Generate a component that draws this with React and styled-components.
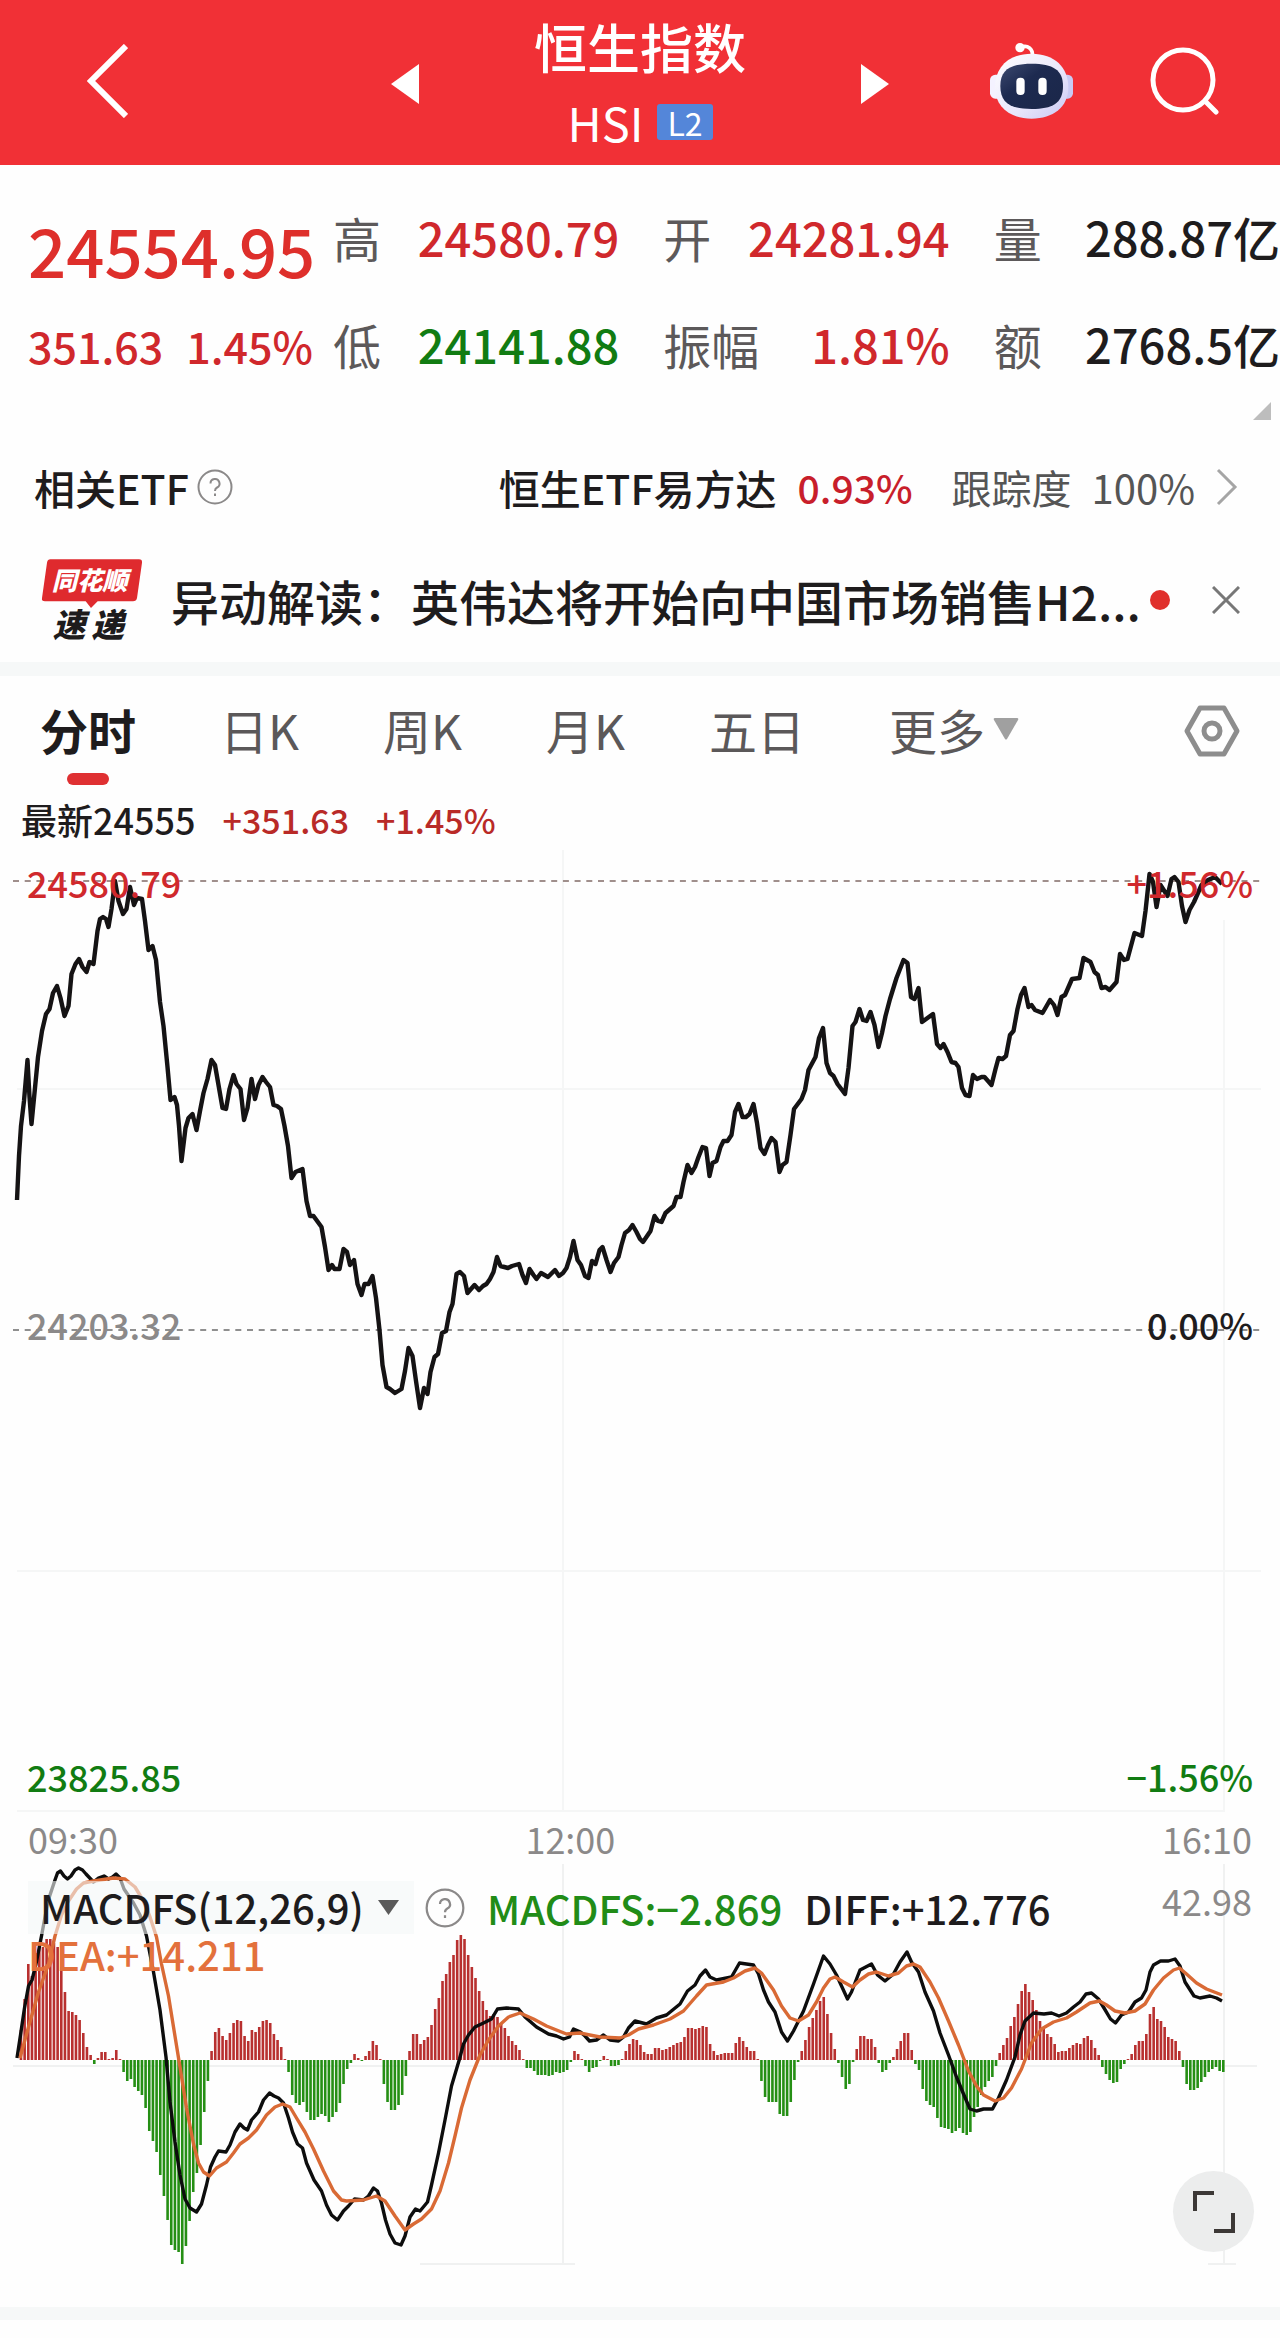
import React, { useState } from 'react';
import styled, { createGlobalStyle } from 'styled-components';

const RED = '#d0282c';
const GREEN = '#117c12';
const INK = '#1e1c1d';
const GREY = '#8b8989';

// minute prices, "x,y" in plot units
const PRICE_LINE = `
17,1200 19,1156 21,1126 24,1101 27.5,1060 29.5,1097 31.5,1124 34.5,1093 38,1057 42,1031 46,1014 49.5,1009 53,993 57,986
60.5,998 64.5,1016 68.5,1006 71.5,974 75.5,964 79,959 82.5,967 86.5,972 89.5,962 93.5,964 97.5,931 100,919 103,917 106,919
108.5,927 111.5,909 115,881 118.5,901 123,914 126.5,909 130,887 134,905 137,898 142,899 145,921 148.5,950 152.5,946 156,960
160,1002 163.5,1026 167.5,1067 170.5,1100 174.5,1097 177,1105 179,1126 181.5,1161 185.5,1128 188.5,1118 192.5,1114 196.5,1130
200,1111 203.5,1093 207.5,1079 211.5,1060 215,1065 218.5,1085 222.5,1108 226,1109 229.5,1089 233.5,1075 236.5,1084 240.5,1089
244,1120 247.5,1108 251.5,1079 255,1099 258.5,1085 262.5,1077 266,1082 270,1087 273.5,1105 277,1106 281,1109 284.5,1126
288,1146 291.5,1178 295.5,1172 302.5,1169 306.5,1201 310,1216 313.5,1216 321.5,1227 325,1247 328.5,1270 332,1265 334.5,1269
339.5,1269 343.5,1249 347,1252 350,1265 354,1260 357.5,1284 361.5,1295 364.5,1284 368.5,1284 372.5,1276 376,1298 379.5,1330
382.5,1365 386.5,1387 390,1389 395,1393 401.5,1389 405,1371 408.5,1348 412.5,1356 416,1381 420,1408 424,1388 427.5,1394
430.5,1372 434.5,1357 438,1354 442,1333 446,1331 449.5,1312 452.5,1304 456.5,1274 460,1272 464,1276 467.5,1293 474.5,1285
479,1290 483,1286 486.5,1284 490,1279 493.5,1272 497,1257 500.5,1266 508,1268 512,1266 519,1264 522.5,1275 526,1283
529.5,1269 533.5,1275 536.5,1279 541,1273 548,1277 555,1270 559,1276 563,1273 566.5,1268 570,1257 573.5,1241 577.5,1260
581,1265 585,1276 588.5,1278 592,1261 595.5,1264 599.5,1250 602.5,1247 606.5,1260 610.5,1272 614,1263 618.5,1257 621.5,1245
625,1233 629,1230 632.5,1225 636.5,1232 640,1239 643,1242 650.5,1231 654.5,1216 658,1221 661.5,1222 665.5,1213 673.5,1206
676.5,1197 680.5,1197 683.5,1182 687.5,1165 691.5,1173 695,1167 698.5,1157 702.5,1147 706,1148 709.5,1176 712.5,1163
716.5,1161 720.5,1147 723.5,1141 727.5,1141 731.5,1135 735,1112 738.5,1104 742.5,1117 746,1117 749.5,1114 753.5,1104
757,1123 760.5,1148 764.5,1154 768,1145 771.5,1138 775.5,1142 779.5,1172 782.5,1165 786.5,1162 790.5,1135 794,1109
801.5,1099 805,1090 808.5,1070 815.5,1057 819,1038 823,1028 826.5,1063 830,1073 833.5,1076 837.5,1084 845,1094 848.5,1068
852.5,1026 855.5,1022 859.5,1009 863,1020 866.5,1021 870.5,1012 874.5,1025 878.5,1047 882,1033 885.5,1016 890,999 896.5,978
903.5,960 907.5,963 911,997 914.5,999 918.5,988 922,1022 933,1014 937,1044 940.5,1048 943.5,1044 947.5,1052 951.5,1062
955.5,1063 958.5,1067 962,1088 965.5,1095 969.5,1096 973,1075 977,1079 981.5,1077 984.5,1077 991.5,1085 995.5,1069
998.5,1058 1002.5,1059 1006,1056 1010,1035 1013.5,1031 1017.5,1009 1021,995 1024.5,988 1028.5,1007 1031.5,1005 1035,1010
1042.5,1013 1046,1007 1050,1000 1054,1005 1057.5,1015 1061.5,997 1065,995 1072,979 1079.5,978 1083.5,958 1090.5,962
1094.5,972 1098,975 1101.5,988 1105.5,987 1109.5,990 1116.5,982 1120,954 1124,960 1127.5,959 1134.5,933 1142,936 1145.5,911
1149.5,874 1153,882 1156.5,907 1160.5,885 1167.5,896 1171.5,879 1174.5,877 1178.5,882 1182,906 1185.5,922 1189.5,910
1194,902 1201.5,885 1208,880 1215,877 1222,884`;

const DIFF_LINE = `
17,2058 20.5,2035 24.5,2008 28.5,1986 32,1980 36,1964 41.5,1936 48,1901 55,1880 57.5,1873 60.5,1871 64,1876 67.5,1879
71,1876 75,1870 78.5,1868 82.5,1870 86,1874 93.5,1882 98.5,1878 104,1876 108.5,1879 112.5,1877 116,1874 120,1878 124,1889
133.5,1903 140,1915 146.5,1936 153.5,1972 160,2010 166,2057 170,2102 175,2142 180,2175 185,2199 190,2208 196.5,2212
201.5,2204 206.5,2185 210.5,2167 215,2157 218.5,2151 226,2152 230,2145 235,2132 240,2124 244,2128 247.5,2130 251.5,2120
258.5,2112 263.5,2100 269.5,2093 274,2096 278.5,2098 283.5,2103 288.5,2118 292.5,2132 297.5,2144 302.5,2148 306.5,2163
314,2180 321.5,2191 326.5,2205 331.5,2215 337.5,2220 343.5,2211 348.5,2206 354.5,2199 363.5,2200 368.5,2196 373.5,2188
377.5,2191 381.5,2203 385.5,2220 390,2234 395,2243 401,2245 405,2236 410,2217 415.5,2209 420,2211 427.5,2202 431.5,2185
438.5,2153 445,2120 451.5,2086 459.5,2059 463.5,2044 468.5,2035 475,2027 483.5,2023 491.5,2019 497.5,2009 506.5,2008
518.5,2009 525,2017 536.5,2027 548.5,2034 556.5,2036 563.5,2039 569.5,2037 573.5,2029 580.5,2032 585,2036 589.5,2041
596.5,2040 603.5,2035 610,2040 618.5,2041 623.5,2037 628.5,2028 635,2021 646.5,2024 656.5,2018 666.5,2015 680,2004
687.5,1991 695,1985 700,1976 705.5,1970 710,1977 716.5,1980 731.5,1977 739.5,1963 753.5,1965 758.5,1974 763.5,1990
768.5,2002 775,2012 781.5,2032 787.5,2041 793.5,2031 803.5,2011 813.5,1984 818.5,1970 823.5,1956 830,1964 836.5,1975
847.5,1999 851.5,1992 860,1970 871.5,1964 877.5,1975 885,1981 893.5,1974 900,1962 907,1952 911.5,1962 918.5,1972 925,1992
933.5,2011 940,2033 948.5,2055 956.5,2077 963.5,2094 970,2109 976.5,2111 983.5,2109 992.5,2109 998.5,2098 1006.5,2080
1015,2057 1020,2035 1025,2021 1033.5,2013 1044,2014 1051.5,2013 1059,2016 1066.5,2013 1073.5,2007 1080,2002 1086,1994
1091.5,1993 1098.5,1999 1104,2008 1110.5,2019 1115.5,2023 1121.5,2015 1128.5,2012 1135,2002 1141.5,1998 1146,1990
1150,1972 1153.5,1965 1160.5,1961 1168.5,1961 1175,1959 1180,1966 1185,1982 1194,1996 1200,1998 1210,1996 1216.5,1998
1222,2001`;

const DEA_LINE = `
20,2058 28.5,2027 38.5,1992 48.5,1964 55,1936 61.5,1915 68.5,1901 76.5,1889 83.5,1883 93.5,1881 113.5,1878 125,1879
135,1887 143.5,1901 150,1917 156.5,1937 161.5,1964 168.5,1996 173.5,2027 180,2067 186.5,2108 193.5,2144 198.5,2163
203.5,2172 209.5,2176 216.5,2168 226.5,2162 233.5,2153 240,2144 248.5,2138 256.5,2130 266.5,2115 275,2107 282.5,2104
290,2107 296.5,2118 305,2132 313.5,2149 323.5,2171 333.5,2191 341.5,2200 346.5,2201 363.5,2200 376.5,2196 385,2201
395,2216 405,2230 413.5,2224 421.5,2219 431.5,2209 440,2191 448.5,2163 455,2136 461.5,2108 470,2080 480,2055 488.5,2040
498.5,2026 508.5,2017 520,2013 533.5,2019 546.5,2026 566.5,2034 580,2033 600,2037 620,2038 628.5,2035 638.5,2029
653.5,2025 670,2019 683.5,2011 696.5,1996 706.5,1985 723.5,1982 733.5,1978 745,1971 755,1968 761.5,1973 773.5,1990
781.5,2006 790,2018 798.5,2021 808.5,2015 816.5,2002 823.5,1988 830,1979 835,1977 843.5,1982 852.5,1987 860,1980
868.5,1974 876.5,1972 888.5,1976 898.5,1973 906.5,1966 913.5,1964 920,1967 930,1982 938.5,1998 948.5,2021 958.5,2045
968.5,2071 976.5,2086 983.5,2095 995,2101 1003.5,2098 1011.5,2088 1021.5,2069 1031.5,2043 1041.5,2029 1053.5,2022
1066.5,2018 1076.5,2012 1090,2003 1099.5,2001 1106.5,2005 1115,2011 1125,2013 1135,2011 1145,2004 1153.5,1990 1163.5,1978
1173.5,1970 1179.5,1968 1186.5,1974 1196.5,1983 1206.5,1989 1222,1995`;

const MACD_BARS = [
    0, 30, 61, 96, 84, 107, 113, 113, 121, 121, 117, 113, 93, 68, 49, 48, 45, 40, 27, 13, 5, -4, 2, 8, 8, 1, 2, 10, 1,
    -12, -21, -19, -27, -31, -35, -48, -71, -81, -92, -115, -136, -160, -185, -190, -192, -204, -186, -161, -132, -113, -85, -52, -21,
    9, 28, 32, 24, 20, 27, 37, 40, 39, 24, 19, 30, 28, 33, 39, 40, 37, 26, 20, 13, 1,
    -12, -35, -43, -45, -42, -52, -60, -60, -57, -54, -56, -62, -57, -52, -43, -24, -9, -3,
    6, 2, -1, 4, 9, 19, 15, 1, -24, -42, -50, -50, -45, -35, -16,
    9, 26, 26, 16, 20, 23, 35, 51, 62, 79, 86, 98, 105, 120, 125, 121, 105, 93, 82, 69, 59, 50, 44, 46, 43, 37, 32, 24, 19, 15, 10, 1,
    -8, -8, -11, -15, -15, -15, -16, -15, -12, -13, -12, -10, -2, 9, 6, 1, -6, -12, -8, -7, -1, 4, 1, -6, -6, -5, 1,
    9, 16, 21, 20, 15, 8, 6, 6, 12, 12, 10, 11, 13, 15, 17, 18, 23, 32, 32, 31, 32, 34, 33, 16, 9, 5, 6, 7, 7, 7, 17, 23, 19, 13, 9, 9, 1,
    -21, -37, -42, -42, -42, -54, -56, -56, -42, -20, -2, 9, 20, 33, 42, 50, 59, 63, 46, 27, 11, -3, -17, -29, -24, -2,
    11, 24, 24, 21, 21, 13, -3, -12, -10, -3, 3, 11, 19, 27, 27, 10, -4, -10, -29, -41, -45, -47, -58, -67, -68, -69, -73, -71, -68, -73, -75, -72, -57, -47, -35, -27, -21, -17, -6,
    7, 15, 22, 34, 43, 56, 69, 76, 68, 60, 50, 39, 31, 26, 23, 16, 8, 9, 9, 12, 15, 17, 16, 22, 24, 20, 12, 5,
    -7, -14, -20, -23, -22, -9, -4, 1, 6, 15, 19, 19, 26, 46, 53, 41, 39, 33, 23, 21, 19, 9,
    -7, -24, -30, -30, -28, -22, -17, -12, -9, -7, -11, -12,
];
const ZERO = 2060;
const barX = (i) => 17 + (i * 1206) / (MACD_BARS.length - 1);

const STATS = [
    { label: '高', value: '24580.79', color: RED },
    { label: '开', value: '24281.94', color: RED },
    { label: '量', value: '288.87亿', color: INK },
    { label: '低', value: '24141.88', color: GREEN },
    { label: '振幅', value: '1.81%', color: RED },
    { label: '额', value: '2768.5亿', color: INK },
];

const TABS = ['分时', '日K', '周K', '月K', '五日'];

function Robot() {
    return (
        <svg width="84" height="78" viewBox="88 66 252 234" fill="none">
            <defs>
                <linearGradient id="shell" x1="0" y1="0" x2="1" y2="1">
                    <stop offset="0" stopColor="#fff" />
                    <stop offset="0.6" stopColor="#e8e6fb" />
                    <stop offset="1" stopColor="#c9c8f4" />
                </linearGradient>
                <linearGradient id="visor" x1="0" y1="0" x2="1" y2="1">
                    <stop offset="0" stopColor="#3d4a70" />
                    <stop offset="0.4" stopColor="#1d2a50" />
                    <stop offset="1" stopColor="#1b2749" />
                </linearGradient>
            </defs>
            <path d="M183 82C204 74 221 86 218 110" stroke="#fff" strokeWidth="11" />
            <circle cx="181" cy="83" r="14" fill="#fff" />
            <rect x="91" y="164" width="46" height="72" rx="16" fill="#f4f2ff" />
            <rect x="294" y="164" width="46" height="72" rx="16" fill="#c9caf3" />
            <path d="M216 101C285 101 326 142 326 202C326 262 280 296 216 296C152 296 106 262 106 202C106 142 147 101 216 101Z" fill="url(#shell)" />
            <path d="M216 131C280 131 310 150 310 198C310 250 278 267 216 267C154 267 122 250 122 198C122 150 152 131 216 131Z" fill="url(#visor)" />
            <rect x="170" y="173" width="25" height="52" rx="12" fill="#fff" />
            <rect x="236" y="173" width="25" height="52" rx="12" fill="#fff" />
        </svg>
    );
}

function NewsLogo() {
    return (
        <LogoSvg width="102" height="96" viewBox="62 56 306 288">
            <path d="M90 60H356Q366 60 365 70L350 176Q348 186 338 186H232L212 206L196 186H74Q63 186 65 176L80 70Q82 60 90 60Z" fill="#df2a2e" />
            <text x="94" y="153" fontSize="76" fill="#fff">同花顺</text>
            <text x="97" y="294" fontSize="98" fill={INK}>速</text>
            <text x="213" y="294" fontSize="98" fill={INK}>递</text>
        </LogoSvg>
    );
}

function Question({ size }) {
    return (
        <svg width={size} height={size} viewBox="0 0 36 36" fill="none" stroke={GREY} strokeWidth="2">
            <circle cx="18" cy="18" r="16.5" />
            <path d="M13.5 14.5a4.5 4.5 0 1 1 6.6 4c-1.5.8-2.1 1.6-2.1 3.4" />
            <path d="M18 24.5v2.5" />
        </svg>
    );
}

function App() {
    const [tab, setTab] = useState('分时');
    return (
        <Page>
            <GlobalStyle />
            <Header>
                <HeaderLeft>
                    <IconButton aria-label="返回">
                        <svg width="41" height="74" viewBox="0 0 41 74" fill="none" stroke="#fff" strokeWidth="6">
                            <path d="M39 2L4 37L39 72" />
                        </svg>
                    </IconButton>
                </HeaderLeft>
                <Switcher>
                    <IconButton aria-label="上一个">
                        <svg width="28" height="40" viewBox="0 0 28 40"><path d="M28 0V40L0 20Z" fill="#fff" /></svg>
                    </IconButton>
                    <TitleBlock>
                        <Title>恒生指数</Title>
                        <Code>HSI<Level>L2</Level></Code>
                    </TitleBlock>
                    <IconButton aria-label="下一个">
                        <svg width="28" height="40" viewBox="0 0 28 40"><path d="M0 0V40L28 20Z" fill="#fff" /></svg>
                    </IconButton>
                </Switcher>
                <HeaderRight>
                    <IconButton aria-label="智能助手"><Robot /></IconButton>
                    <IconButton aria-label="搜索">
                        <svg width="69" height="69" viewBox="0 0 69 69" fill="none" stroke="#fff" strokeWidth="5" strokeLinecap="round">
                            <circle cx="33" cy="33" r="30" />
                            <path d="M55 54L66 65" />
                        </svg>
                    </IconButton>
                </HeaderRight>
            </Header>

            <Summary>
                <Quote>
                    <Price>24554.95</Price>
                    <Change><span>351.63</span><span>1.45%</span></Change>
                </Quote>
                <Stats>
                    {STATS.map((s) => (
                        <Stat key={s.label}>
                            <dt>{s.label}</dt>
                            <StatValue $color={s.color}>{s.value}</StatValue>
                        </Stat>
                    ))}
                </Stats>
            </Summary>
            <Corner>
                <svg width="18" height="18" viewBox="0 0 18 18"><path d="M18 0V18H0Z" fill="#bdbdbd" /></svg>
            </Corner>

            <EtfRow>
                <EtfLabel>
                    相关ETF
                    <IconButton aria-label="说明"><Question size={36} /></IconButton>
                </EtfLabel>
                <EtfLink href="#etf">
                    <span>恒生ETF易方达</span>
                    <EtfRate>0.93%</EtfRate>
                    <EtfTrack><span>跟踪度</span><span>100%</span></EtfTrack>
                    <svg width="22" height="38" viewBox="0 0 22 38" fill="none" stroke="#a5a5a5" strokeWidth="3"><path d="M2 2L19 19L2 36" /></svg>
                </EtfLink>
            </EtfRow>

            <NewsRow>
                <NewsLogo />
                <NewsLink href="#news">异动解读：英伟达将开始向中国市场销售H2...</NewsLink>
                <Dot />
                <IconButton aria-label="关闭">
                    <svg width="28" height="28" viewBox="0 0 28 28" stroke="#777" strokeWidth="3"><path d="M1 1L27 27M27 1L1 27" /></svg>
                </IconButton>
            </NewsRow>
            <Band />

            <Tabs>
                {TABS.map((t) => (
                    <Tab key={t} $active={t === tab} onClick={() => setTab(t)}>{t}</Tab>
                ))}
                <Tab aria-haspopup="menu">
                    更多
                    <svg width="26" height="22" viewBox="0 0 26 22"><path d="M2 0H24Q26 0 25 2L14 21Q13 22 12 21L1 2Q0 0 2 0Z" fill="#a0a0a0" /></svg>
                </Tab>
                <Settings aria-label="设置">
                    <svg width="56" height="52" viewBox="0 0 56 52" fill="none" stroke="#8d8d8d" strokeWidth="5" strokeLinejoin="round">
                        <path d="M16 3H40L53 26L40 49H16L3 26Z" />
                        <circle cx="28" cy="26" r="8" />
                    </svg>
                </Settings>
            </Tabs>

            <Latest>
                <span>最新24555</span>
                <Up>+351.63</Up>
                <Up>+1.45%</Up>
            </Latest>

            <Plot>
                <PlotSvg $height={972} viewBox="0 844 1280 972" preserveAspectRatio="none">
                    <g stroke="#f5f6f6" strokeWidth="2">
                        <path d="M563 850V1812M1224 920V1812M17 1089H1261M17 1571H1261M17 1811H1224" />
                    </g>
                    <g strokeWidth="2" strokeDasharray="6 5.7">
                        <path d="M13 881H1261" stroke="#a08f8c" />
                        <path d="M13 1330H1261" stroke="#8f8f8f" />
                    </g>
                    <polyline points={PRICE_LINE} fill="none" stroke="#151314" strokeWidth="4.4" strokeLinejoin="round" />
                </PlotSvg>
                <Scale>
                    <ScaleRow $color={RED}><span>24580.79</span><span>+1.56%</span></ScaleRow>
                    <ScaleRow $color={GREY}><span>24203.32</span><Flat>0.00%</Flat></ScaleRow>
                    <ScaleRow $color={GREEN}><span>23825.85</span><span>−1.56%</span></ScaleRow>
                </Scale>
            </Plot>
            <Times>
                <span>09:30</span>
                <span>12:00</span>
                <span>16:10</span>
            </Times>

            <Plot>
                <PlotSvg $height={432} viewBox="0 1864 1280 432" preserveAspectRatio="none">
                    <path d="M563 1864V2264M1224 1864V2264M13 2066H1257M420 2264H575M1208 2264H1236" stroke="#f0f1f1" strokeWidth="2" />
                    {MACD_BARS.map((v, i) => (
                        <rect
                            key={i}
                            x={barX(i) - 1}
                            y={v > 0 ? ZERO - v : ZERO}
                            width="2.6"
                            height={Math.abs(v)}
                            fill={v > 0 ? '#b8302f' : '#258f14'}
                        />
                    ))}
                    <polyline points={DIFF_LINE} fill="none" stroke="#0d0d0d" strokeWidth="3.4" strokeLinejoin="round" />
                    <polyline points={DEA_LINE} fill="none" stroke="#d96a35" strokeWidth="3.4" strokeLinejoin="round" />
                </PlotSvg>
                <Legend>
                    <LegendRow>
                        <Picker>
                            <select aria-label="指标" defaultValue="macdfs">
                                <option value="macdfs">MACDFS(12,26,9)</option>
                            </select>
                            <svg width="21" height="15" viewBox="0 0 21 15"><path d="M0 0H21L10.5 15Z" fill="#5a5a5a" /></svg>
                        </Picker>
                        <IconButton aria-label="指标说明"><Question size={40} /></IconButton>
                        <Figure $color="#218c17">MACDFS:−2.869</Figure>
                        <Figure $color={INK}>DIFF:+12.776</Figure>
                        <MaxValue>42.98</MaxValue>
                    </LegendRow>
                    <Figure $color="#e3713c">DEA:+14.211</Figure>
                </Legend>
                <Expand aria-label="全屏">
                    <svg width="42" height="42" viewBox="0 0 42 42" fill="none" stroke="#3c3836" strokeWidth="4">
                        <path d="M2 20V2H21M40 22V40H21" />
                    </svg>
                </Expand>
            </Plot>
            <BottomBand />
        </Page>
    );
}

export default App;

const GlobalStyle = createGlobalStyle`
body {
    margin: 0;
    background: #fefefe;
    color: ${INK};
    font-family: "Noto Sans CJK SC", sans-serif;
    font-weight: 500;
}
button, select {
    font: inherit;
    color: inherit;
    border: 0;
    padding: 0;
    background: none;
    cursor: pointer;
}
a {
    color: inherit;
    text-decoration: none;
}
svg {
    display: block;
    flex: none;
}
`;

const Page = styled.div`
overflow: hidden;
padding-bottom: 18px;
`;

const IconButton = styled.button`
display: flex;
flex: none;
`;

const Header = styled.header`
display: grid;
grid-template-columns: 1fr 498px 1fr;
padding: 16px 0 13px;
background: #f13036;
color: #fff;
`;

const HeaderLeft = styled.div`
display: flex;
align-items: center;
padding: 0 0 6px 87px;
`;

const Switcher = styled.div`
display: flex;
align-items: center;
justify-content: space-between;
`;

const TitleBlock = styled.div`
display: flex;
flex-direction: column;
align-items: center;
gap: 16px;
`;

const Title = styled.h1`
margin: 0;
font-size: 53px;
font-weight: 500;
line-height: 60px;
`;

const Code = styled.div`
display: flex;
align-items: center;
gap: 14px;
font-size: 47px;
font-weight: 400;
line-height: 60px;
`;

const Level = styled.span`
padding: 0 10px;
border-radius: 3px;
background: #5486d9;
font-size: 32px;
line-height: 36px;
`;

const HeaderRight = styled.div`
display: flex;
align-items: center;
justify-content: flex-end;
gap: 77px;
padding: 0 61px 6px 0;
`;

const Summary = styled.section`
display: flex;
gap: 20px;
padding: 42px 0 0 28px;
`;

const Quote = styled.div`
flex: 285;
min-width: 0;
padding-top: 6px;
color: ${RED};
`;

const Price = styled.div`
margin-bottom: 30px;
color: #de2f2b;
font-size: 67px;
line-height: 72px;
`;

const Change = styled.div`
display: flex;
justify-content: space-between;
font-size: 43px;
line-height: 60px;
`;

const Stats = styled.dl`
flex: 947;
display: grid;
grid-template-columns: repeat(3, 1fr);
gap: 45px 44px;
margin: 0;
font-size: 48px;
line-height: 60px;
`;

const Stat = styled.div`
display: flex;
justify-content: space-between;
white-space: nowrap;
dt {
    color: #5c595a;
    font-weight: 400;
}
`;

const StatValue = styled.dd`
margin: 0;
color: ${(props) => props.$color};
font-size: 47px;
`;

const Corner = styled.div`
display: flex;
justify-content: flex-end;
padding: 27px 9px 0;
`;

const EtfRow = styled.section`
display: flex;
justify-content: space-between;
margin-top: 37px;
padding: 0 42px 0 34px;
font-size: 41px;
line-height: 60px;
`;

const EtfLabel = styled.div`
display: flex;
align-items: center;
gap: 8px;
`;

const EtfLink = styled.a`
display: flex;
align-items: center;
gap: 21px;
`;

const EtfRate = styled.span`
color: #c81e2b;
font-size: 39px;
`;

const EtfTrack = styled.span`
display: flex;
gap: 20px;
margin-left: 18px;
color: #555;
font-size: 40px;
font-weight: 400;
`;

const NewsRow = styled.section`
display: flex;
align-items: center;
margin-top: 41px;
padding: 0 40px 20px 41px;
`;

const LogoSvg = styled.svg`
margin-bottom: -12px;
font-style: italic;
font-weight: 900;
`;

const NewsLink = styled.a`
flex: 1;
margin-left: 28px;
font-size: 48px;
line-height: 60px;
white-space: nowrap;
`;

const Dot = styled.span`
width: 20px;
height: 20px;
margin-right: 42px;
border-radius: 50%;
background: #e0302c;
`;

const Band = styled.div`
height: 14px;
background: #f6f8f8;
`;

const Tabs = styled.nav`
display: flex;
align-items: flex-start;
gap: 84px;
padding: 23px 40px 0 40px;
`;

const Tab = styled.button`
display: flex;
align-items: center;
gap: 8px;
position: relative;
padding-bottom: 38px;
color: ${(props) => (props.$active ? INK : '#5b5859')};
font-size: 48px;
font-weight: ${(props) => (props.$active ? 700 : 400)};
line-height: 60px;
&::after {
    content: '';
    display: ${(props) => (props.$active ? 'block' : 'none')};
    position: absolute;
    bottom: 12px;
    left: 50%;
    width: 42px;
    height: 12px;
    margin-left: -21px;
    border-radius: 6px;
    background: #df3032;
}
`;

const Settings = styled(IconButton)`
margin: 6px 0 0 auto;
`;

const Latest = styled.div`
display: flex;
gap: 27px;
padding: 0 21px 2px;
font-size: 36px;
line-height: 45px;
`;

const Up = styled.span`
color: #b92a27;
font-size: 34px;
`;

const Plot = styled.div`
position: relative;
`;

const PlotSvg = styled.svg`
width: 100%;
height: ${(props) => props.$height}px;
`;

const Scale = styled.div`
position: absolute;
inset: 18px 27px auto;
display: grid;
grid-template-rows: 442px 452px 40px;
`;

const ScaleRow = styled.div`
display: flex;
justify-content: space-between;
color: ${(props) => props.$color};
font-size: 36px;
line-height: 40px;
`;

const Flat = styled.span`
color: ${INK};
`;

const Times = styled.div`
display: grid;
grid-template-columns: 497fr 363fr 363fr;
padding: 0 28px 4px;
color: ${GREY};
font-size: 36px;
font-weight: 400;
line-height: 44px;
span:last-child {
    text-align: right;
}
`;

const Legend = styled.div`
position: absolute;
inset: 17px 28px auto;
`;

const LegendRow = styled.div`
display: flex;
align-items: center;
`;

const Picker = styled.label`
display: flex;
align-items: center;
gap: 14px;
height: 53px;
margin-right: 11px;
padding: 0 15px 0 12px;
background: rgba(243, 246, 246, 0.6);
font-size: 40px;
select {
    appearance: none;
    outline: none;
    line-height: 53px;
}
`;

const Figure = styled.div`
margin-left: 22px;
color: ${(props) => props.$color};
font-size: 40px;
line-height: 40px;
${LegendRow} + & {
    margin-left: 0;
}
`;

const MaxValue = styled.div`
align-self: flex-start;
margin-left: auto;
color: ${GREY};
font-size: 36px;
font-weight: 400;
line-height: 38px;
`;

const Expand = styled.button`
display: flex;
align-items: center;
justify-content: center;
position: absolute;
right: 26px;
bottom: 44px;
width: 81px;
height: 81px;
border-radius: 50%;
background: #eceded;
`;

const BottomBand = styled.div`
height: 13px;
margin-top: 11px;
background: #f6f8f8;
`;
